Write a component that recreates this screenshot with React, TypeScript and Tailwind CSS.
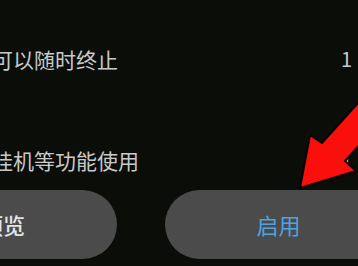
import React from "react";

export default function App() {
  const font = { fontFamily: '"Noto Sans CJK SC", "Noto Sans", sans-serif' };
  return (
    <div
      className="relative w-[358px] h-[266px] overflow-hidden bg-[#0b0d09]"
      style={font}
    >
      <div className="flex flex-col pt-[45px]">
        <div className="flex justify-between items-center -ml-[8px] pr-[6px] h-[28px]">
          <span className="text-[21px] leading-[28px] text-[#c9c9c9] tracking-[0px]">可以随时终止</span>
          <span className="text-[20px] leading-[28px] text-[#c4cbd6]">1</span>
        </div>
        <div className="flex justify-between items-center -ml-[8px] pr-[6px] h-[28px] mt-[73px]">
          <span className="text-[21px] leading-[28px] text-[#c9c9c9]">挂机等功能使用</span>
          <span className="text-[20px] leading-[28px] text-[#c4cbd6]">1</span>
        </div>
        <div className="flex gap-[48px] -ml-[111px] mt-[16px]">
          <button className="shrink-0 w-[228px] h-[69px] rounded-full bg-[#4b4b4b] flex items-center justify-center text-[22px] text-[#e4e4e4] font-medium">
            预览
          </button>
          <button className="shrink-0 w-[227px] h-[69px] rounded-full bg-[#4b4b4b] flex items-center justify-center text-[22px] text-[#4ea3e0]">
            启用
          </button>
        </div>
      </div>
      <svg
        className="absolute left-0 top-0"
        width="358"
        height="266"
        viewBox="0 0 358 266"
      >
        <polygon
          points="300,188 310,135 322,143 394,63 417,81 345,161 356,171"
          fill="#fb0f0c"
          stroke="#050505"
          strokeWidth="2"
          strokeLinejoin="miter"
        />
      </svg>
    </div>
  );
}
